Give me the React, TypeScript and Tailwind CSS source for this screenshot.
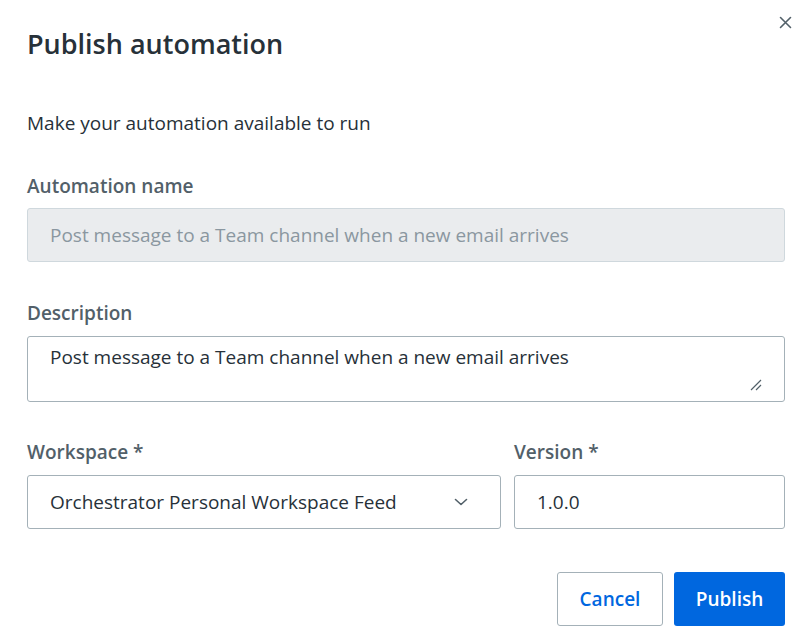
import React from "react";

export default function App() {
  return (
    <div
      className="relative w-[808px] h-[642px] bg-white text-[#273139]"
      style={{ fontFamily: '"Open Sans", sans-serif' }}
    >
      <button className="absolute right-[16px] top-[15px] w-[14px] h-[14px] flex items-center justify-center text-[#526069]">
        <svg width="13" height="13" viewBox="0 0 13 13" fill="none">
          <path d="M1.5 1.5 L11.5 11.5 M11.5 1.5 L1.5 11.5" stroke="currentColor" strokeWidth="1.6" strokeLinecap="round" />
        </svg>
      </button>
      <div className="pl-[27px] pr-[23px] pt-[25px] flex flex-col">
        <h1 className="text-[27px] leading-[38px] font-semibold text-[#273139]">Publish automation</h1>
        <p className="mt-[47px] text-[19px] leading-[26px] text-[#273139]">Make your automation available to run</p>

        <label className="mt-[37px] text-[19px] leading-[26px] font-semibold text-[#526069]">Automation name</label>
        <div className="mt-[9px] h-[54px] rounded-[3px] border border-[#cfd8dd] bg-[#eaecee] flex items-center px-[22px] text-[19px] text-[#8a97a0]">
          Post message to a Team channel when a new email arrives
        </div>

        <label className="mt-[38px] text-[19px] leading-[26px] font-semibold text-[#526069]">Description</label>
        <div className="relative mt-[10px] h-[66px] rounded-[3px] border border-[#a4b1b8] bg-white px-[22px] pt-[7px] text-[19px] leading-[26px] text-[#273139]">
          Post message to a Team channel when a new email arrives
          <svg className="absolute right-[22px] bottom-[10px]" width="12" height="12" viewBox="0 0 12 12" fill="none">
            <path d="M1 11 L11 1 M6 11 L11 6" stroke="#526069" strokeWidth="1.2" />
          </svg>
        </div>

        <div className="mt-[37px] flex gap-[13px]">
          <div className="w-[474px] flex flex-col">
            <label className="text-[19px] leading-[26px] font-semibold text-[#526069]">Workspace *</label>
            <div className="mt-[10px] h-[54px] rounded-[3px] border border-[#a4b1b8] bg-white flex items-center justify-between pl-[22px] pr-[32px] text-[19px] text-[#273139]">
              <span>Orchestrator Personal Workspace Feed</span>
              <svg width="14" height="8" viewBox="0 0 14 8" fill="none">
                <path d="M1.5 1.5 L7 6.5 L12.5 1.5" stroke="#526069" strokeWidth="1.6" strokeLinecap="round" strokeLinejoin="round" />
              </svg>
            </div>
          </div>
          <div className="flex-1 flex flex-col">
            <label className="text-[19px] leading-[26px] font-semibold text-[#526069]">Version *</label>
            <div className="mt-[10px] h-[54px] rounded-[3px] border border-[#a4b1b8] bg-white flex items-center px-[22px] text-[19px] text-[#273139]">
              1.0.0
            </div>
          </div>
        </div>

        <div className="mt-[43px] flex justify-end gap-[11px]">
          <button className="w-[106px] h-[54px] rounded-[3px] border border-[#a4b1b8] bg-white text-[#0067df] text-[19px] font-semibold">
            Cancel
          </button>
          <button className="w-[111px] h-[54px] rounded-[3px] bg-[#0067df] text-white text-[19px] font-semibold">
            Publish
          </button>
        </div>
      </div>
    </div>
  );
}
